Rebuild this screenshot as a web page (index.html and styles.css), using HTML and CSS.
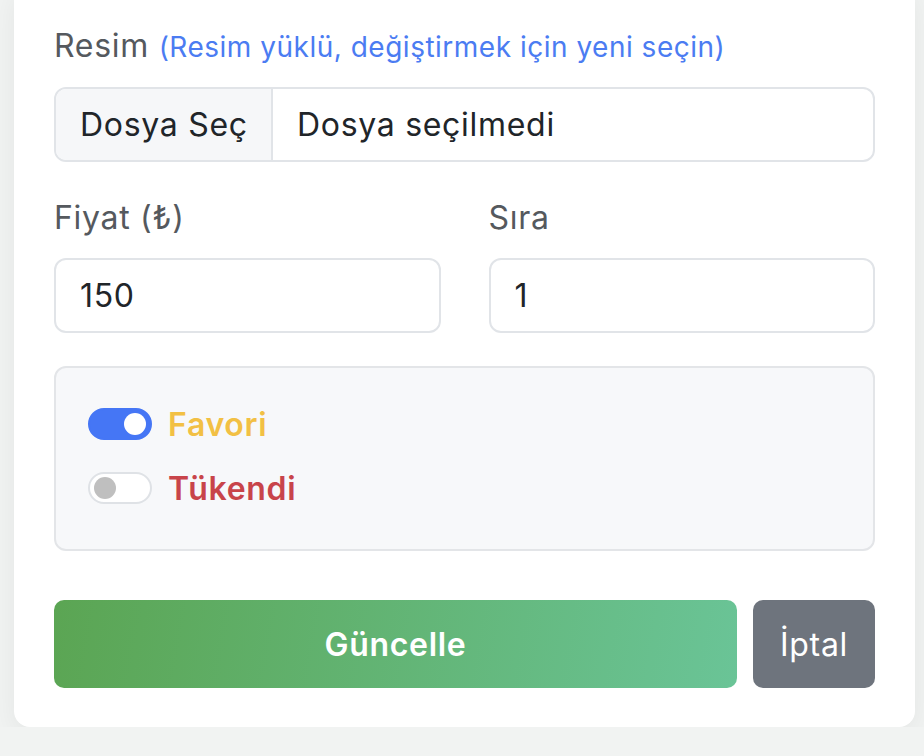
FILE: index.html
```html
<!DOCTYPE html>
<html lang="tr">

<head>
  <meta charset="UTF-8">
  <meta name="viewport" content="width=device-width, initial-scale=1.0">
  <title>Ürün Düzenle</title>
  <link rel="stylesheet" href="styles.css">
</head>

<body>
  <div class="card">
    <div class="field">
      <label class="form-label">Resim <span class="hint">(Resim yüklü, değiştirmek için yeni seçin)</span></label>
      <div class="file-box">
        <span class="file-btn">Dosya Seç</span>
        <span class="file-name">Dosya seçilmedi</span>
      </div>
    </div>

    <div class="row">
      <div class="col">
        <label class="form-label">Fiyat (₺)</label>
        <div class="input">150</div>
      </div>
      <div class="col">
        <label class="form-label">Sıra</label>
        <div class="input">1</div>
      </div>
    </div>

    <div class="switch-box">
      <div class="switch-row">
        <span class="toggle on"><span class="knob"></span></span>
        <span class="sw-label fav">Favori</span>
      </div>
      <div class="switch-row">
        <span class="toggle"><span class="knob"></span></span>
        <span class="sw-label out">Tükendi</span>
      </div>
    </div>

    <div class="actions">
      <button class="btn btn-save">Güncelle</button>
      <button class="btn btn-cancel">İptal</button>
    </div>
  </div>
</body>

</html>
```

FILE: styles.css
```css
* {
  margin: 0;
  padding: 0;
  box-sizing: border-box;
}

body {
  background-color: #f1f3f2;
  font-family: Inter, "Open Sans", sans-serif;
  font-size: 32px;
  letter-spacing: 0.7px;
  color: #212529;
  overflow: hidden;
}

.card {
  width: 901px;
  margin: -16px 0 0 14px;
  padding: 38px 40px 39px;
  background-color: #fff;
  border-radius: 16px;
  box-shadow: 0 8px 28px rgba(0, 0, 0, 0.06);
}

.form-label {
  display: block;
  line-height: 48px;
  color: #55595e;
  margin-bottom: 16px;
}

.hint {
  font-size: 28px;
  letter-spacing: 0.5px;
  color: #4b7cf2;
}

.field {
  margin-bottom: 32px;
}

.file-box {
  display: flex;
  height: 75px;
  border: 2px solid #e1e4e8;
  border-radius: 12px;
  overflow: hidden;
}

.file-btn {
  display: flex;
  align-items: center;
  width: 217px;
  padding-left: 24px;
  background-color: #f6f7f9;
  border-right: 2px solid #e1e4e8;
}

.file-name {
  display: flex;
  align-items: center;
  padding-left: 24px;
}

.row {
  display: flex;
  gap: 48px;
  margin-bottom: 33px;
}

.col {
  flex: 1;
}

.input {
  height: 75px;
  border: 2px solid #e1e4e8;
  border-radius: 12px;
  padding-left: 24px;
  display: flex;
  align-items: center;
}

.switch-box {
  background-color: #f7f8fa;
  border: 2px solid #e3e5e8;
  border-radius: 12px;
  padding: 35px 32px 40px;
  display: flex;
  flex-direction: column;
  gap: 22px;
  margin-bottom: 49px;
}

.switch-row {
  display: flex;
  align-items: center;
  gap: 16px;
  height: 42px;
}

.toggle {
  width: 64px;
  height: 32px;
  border-radius: 16px;
  background-color: #fff;
  border: 2px solid #dfe2e6;
  display: flex;
  align-items: center;
  padding: 0 4px;
}

.toggle .knob {
  width: 22px;
  height: 22px;
  border-radius: 50%;
  background-color: #bfbfbf;
}

.toggle.on {
  background-color: #4576f5;
  border-color: #4576f5;
  justify-content: flex-end;
}

.toggle.on .knob {
  background-color: #fff;
}

.sw-label {
  font-weight: 600;
}

.fav {
  color: #f2c044;
}

.out {
  color: #c8444a;
}

.actions {
  display: flex;
  gap: 16px;
}

.btn {
  height: 88px;
  border: none;
  border-radius: 10px;
  color: #fff;
  font-family: inherit;
  font-size: 32px;
  letter-spacing: 0.7px;
}

.btn-save {
  flex: 1;
  font-weight: 600;
  background: linear-gradient(100deg, #5ba553 0%, #6ac497 100%);
}

.btn-cancel {
  width: 122px;
  background-color: #6e747d;
}
```
